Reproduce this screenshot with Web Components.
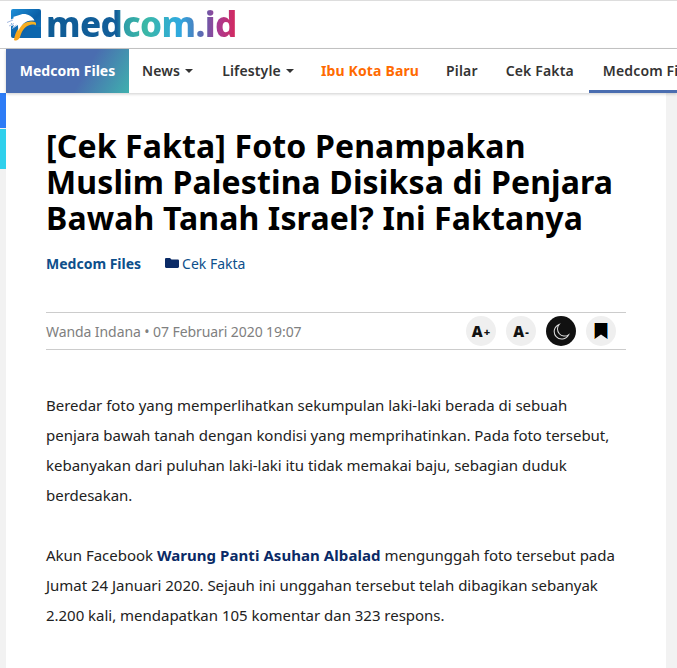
<!DOCTYPE html>
<html lang="id">
<head>
<meta charset="utf-8">
<title>Medcom.id</title>
<style>
    html, body { margin: 0; padding: 0; height: 668px; overflow: hidden; background: #f2f2f2; }
    body { font-family: "Noto Sans", "Open Sans", sans-serif; }
    article-body b { color: #0a2a66; letter-spacing: .06px; }
</style>
</head>
<body>
<site-header></site-header>
<side-share></side-share>
<article-page>
    <article-title>[Cek Fakta] Foto Penampakan Muslim Palestina Disiksa di Penjara Bawah Tanah Israel? Ini Faktanya</article-title>
    <article-crumbs></article-crumbs>
    <article-meta></article-meta>
    <article-body>
        <p>Beredar foto yang memperlihatkan sekumpulan laki-laki berada di sebuah penjara bawah tanah dengan kondisi yang memprihatinkan. Pada foto tersebut, kebanyakan dari puluhan laki-laki itu tidak memakai baju, sebagian duduk berdesakan.</p>
        <p>Akun Facebook <b>Warung Panti Asuhan Albalad</b> mengunggah foto tersebut pada Jumat 24 Januari 2020. Sejauh ini unggahan tersebut telah dibagikan sebanyak 2.200 kali, mendapatkan 105 komentar dan 323 respons.</p>
    </article-body>
</article-page>

<script>
class SiteHeader extends HTMLElement {
    constructor() {
        super();
        const shadow = this.attachShadow({ mode: 'open' });
        shadow.innerHTML = `
            <style>
                :host { display: block; background: #fff; border-top: 1px solid #ddd; position: relative; z-index: 2; }
                .logo-row { height: 47px; padding-left: 6px; display: flex; align-items: center; border-bottom: 1px solid #c8c8c8; }
                .logo { display: flex; align-items: center; }
                .word {
                    font: 800 35px/40px "Noto Sans", sans-serif;
                    letter-spacing: -0.6px;
                    margin-left: 5px;
                    margin-top: -1px;
                    background: linear-gradient(90deg, #0f5c96 0, #125e9a 37%, #2f9fa8 41%, #3bb8a6 52%, #2fa9e0 70%, #4a80c0 78%, #6a5aa8 84%, #a83a92 90%, #d8285a 100%);
                    -webkit-background-clip: text;
                    background-clip: text;
                    color: transparent;
                }
                nav { display: flex; height: 44px; margin-left: 6px; overflow: hidden; box-shadow: 0 1px 3px rgba(0,0,0,.2); font-size: 14px; font-weight: 600; color: #333; letter-spacing: .15px; }
                a { display: flex; align-items: center; flex: none; padding: 2px 14px 0; white-space: nowrap; box-sizing: border-box; border-bottom: 3px solid transparent; }
                a.files { width: 123px; padding: 0 0 2px; border-bottom: 0; justify-content: center; color: #fff; font-weight: 700; letter-spacing: .05px; background: linear-gradient(120deg, #4a6db0 0, #4a6db0 62%, #3fb0ae 100%); }
                a.news { padding-left: 13px; padding-right: 15px; }
                a.life { padding-right: 13px; }
                a.hot { color: #ff6a00; font-weight: 700; padding-right: 13px; }
                a.cek { padding-right: 15px; }
                a.cur { border-bottom-color: #4a6db0; }
                .caret { width: 0; height: 0; margin-left: 5px; border: 4.5px solid transparent; border-top-color: currentColor; border-bottom: 0; }
            </style>
            <div class="logo-row">
                <div class="logo">
                    <svg width="35" height="32" viewBox="0 0 35 32">
                        <defs>
                            <linearGradient id="sq" x1="0" y1="0" x2="1" y2="1">
                                <stop offset="0" stop-color="#1d8fd8"/>
                                <stop offset=".55" stop-color="#0a5fa6"/>
                                <stop offset="1" stop-color="#1a7cc4"/>
                            </linearGradient>
                            <linearGradient id="bk" x1="1" y1="0" x2="0" y2="1">
                                <stop offset="0" stop-color="#f5b324"/>
                                <stop offset="1" stop-color="#f7a21a"/>
                            </linearGradient>
                        </defs>
                        <rect x="5" y="0" width="30" height="29" rx="2" fill="url(#sq)"/>
                        <path d="M16 29C19 22 24 18 30 18L35 18V29Z" fill="#0c66ad"/>
                        <path d="M8 31C9 22 15 13 25 12.5 29.500 12.300 31 14 29.500 16.500 29 15.500 28 15.500 26 15.600 20 16.200 16 21 14 28 13 31 10 32.500 8 31Z" fill="url(#bk)"/>
                        <path d="M0 13 8 9 7 8 15 5.500C20 4 26 7 28.500 11.500 24 11 20 12 17 15 15 17 13 20 12.500 22 12 19 12 17 12 16L6 20 8 16 2.500 18 6 14.500Z" fill="#fff"/>
                        <path d="M1 13.500 7 11M3 17 8 14.500M7 19 10.500 16" stroke="#8fa8d8" stroke-width=".8" fill="none"/>
                    </svg>
                    <span class="word">medcom.id</span>
                </div>
            </div>
            <nav>
                <a class="files">Medcom Files</a>
                <a class="news">News<i class="caret"></i></a>
                <a class="life">Lifestyle<i class="caret"></i></a>
                <a class="hot">Ibu Kota Baru</a>
                <a>Pilar</a>
                <a class="cek">Cek Fakta</a>
                <a class="cur">Medcom Files</a>
            </nav>
        `;
    }
}

class SideShare extends HTMLElement {
    constructor() {
        super();
        const shadow = this.attachShadow({ mode: 'open' });
        shadow.innerHTML = `
            <style>
                :host { display: block; position: absolute; left: 0; top: 93px; width: 6px; z-index: 1; }
                div { height: 35px; background: #2e7cf6; margin-bottom: 1px; }
                div + div { height: 40px; background: #2fd0ec; }
            </style>
            <div></div><div></div>
        `;
    }
}

class ArticlePage extends HTMLElement {
    constructor() {
        super();
        const shadow = this.attachShadow({ mode: 'open' });
        shadow.innerHTML = `
            <style>
                :host { display: block; margin: 0 11px 0 6px; height: 600px; background: #fff; padding: 35px 40px 0; box-sizing: border-box; }
            </style>
            <slot></slot>
        `;
    }
}

class ArticleTitle extends HTMLElement {
    constructor() {
        super();
        const shadow = this.attachShadow({ mode: 'open' });
        shadow.innerHTML = `
            <style>
                :host { display: block; font-size: 32px; line-height: 36px; font-weight: 700; color: #000; letter-spacing: .13px; }
            </style>
            <slot></slot>
        `;
    }
}

class ArticleCrumbs extends HTMLElement {
    constructor() {
        super();
        const shadow = this.attachShadow({ mode: 'open' });
        shadow.innerHTML = `
            <style>
                :host { display: flex; align-items: center; margin-top: 17px; height: 20px; font-size: 14px; color: #0d4f8b; }
                b { font-weight: 700; margin-right: 24px; }
                svg { margin-right: 3px; }
            </style>
            <b>Medcom Files</b>
            <svg width="14" height="12" viewBox="0 0 14 12"><path d="M0 2.2C0 1.4.6 1 1.200 1H5l1.500 1.500h6.200c.7 0 1.300.5 1.300 1.200v6.100c0 .7-.6 1.200-1.300 1.200H1.200C.6 11 0 10.500 0 9.800Z" fill="#0a2a66"/></svg>
            <span>Cek Fakta</span>
        `;
    }
}

class ArticleMeta extends HTMLElement {
    constructor() {
        super();
        const shadow = this.attachShadow({ mode: 'open' });
        shadow.innerHTML = `
            <style>
                :host { display: flex; align-items: center; justify-content: space-between; margin-top: 39px; height: 36px; border-top: 1px solid #ccc; border-bottom: 1px solid #ccc; font-size: 14px; color: #808080; letter-spacing: -.08px; }
                .tools { display: flex; gap: 10px; margin-right: 10px; letter-spacing: 0; }
                .tools span { width: 30px; height: 30px; border-radius: 50%; background: #efefef; display: flex; align-items: center; justify-content: center; color: #111; font-weight: 900; font-size: 15px; font-family: "Noto Sans", sans-serif; }
                .tools small { font-size: 11px; margin-left: 1px; }
                .tools .dark { background: #111; }
            </style>
            <span>Wanda Indana • 07 Februari 2020 19:07</span>
            <div class="tools">
                <span>A<small>+</small></span>
                <span>A<small>-</small></span>
                <span class="dark"><svg width="17" height="17" viewBox="0 0 18 18"><path d="M6.500 1.500A8 8 0 1 0 16.500 12.500 7.500 7.500 0 0 1 6.500 1.500Z" fill="none" stroke="#ddd" stroke-width="1.100"/></svg></span>
                <span><svg width="14" height="16" viewBox="0 0 14 16"><path d="M.5 0H13.500V16L7 11.500.5 16Z" fill="#000"/><path d="M.5 0V16" stroke="#e8962a" stroke-width="1"/><path d="M13.500 0V16" stroke="#3a9ae8" stroke-width="1"/></svg></span>
            </div>
        `;
    }
}

class ArticleBody extends HTMLElement {
    constructor() {
        super();
        const shadow = this.attachShadow({ mode: 'open' });
        shadow.innerHTML = `
            <style>
                :host { display: block; margin-top: 40px; padding-right: 8px; font-size: 15px; line-height: 30px; color: #222; letter-spacing: -.02px; }
                ::slotted(p) { margin: 0 0 30px; }
            </style>
            <slot></slot>
        `;
    }
}

customElements.define('site-header', SiteHeader);
customElements.define('side-share', SideShare);
customElements.define('article-page', ArticlePage);
customElements.define('article-title', ArticleTitle);
customElements.define('article-crumbs', ArticleCrumbs);
customElements.define('article-meta', ArticleMeta);
customElements.define('article-body', ArticleBody);
</script>
</body>
</html>
